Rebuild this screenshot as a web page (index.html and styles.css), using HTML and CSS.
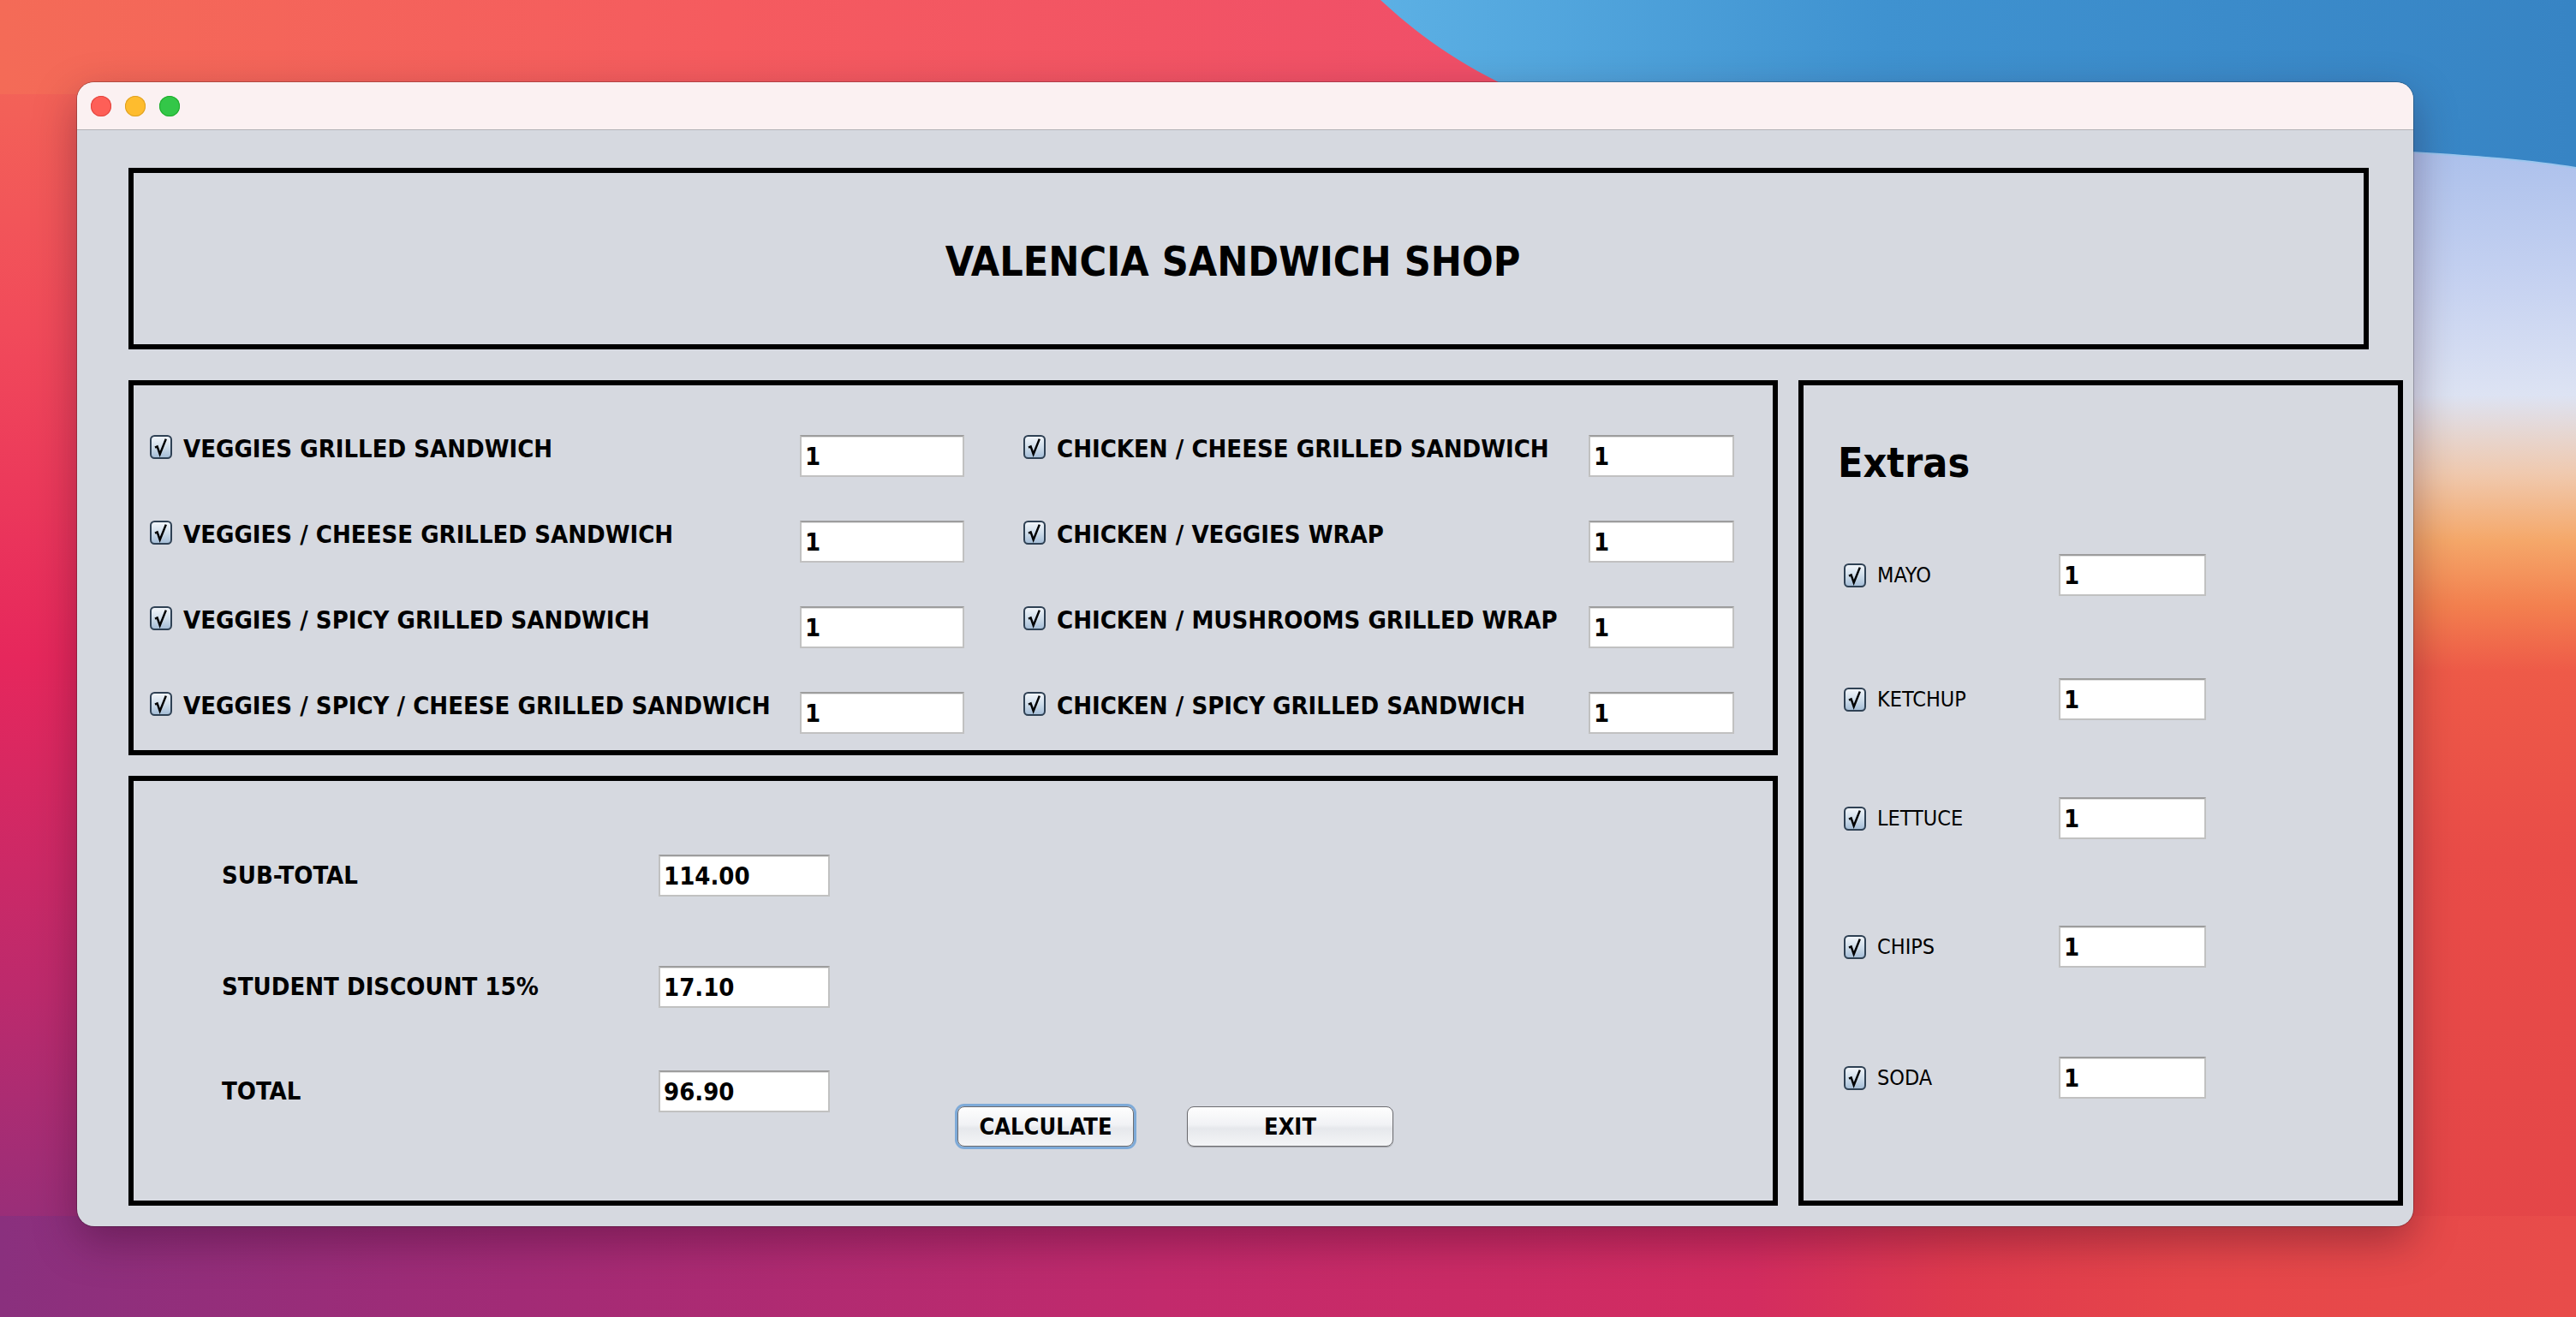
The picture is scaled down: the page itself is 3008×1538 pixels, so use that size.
FILE: index.html
```html
<!DOCTYPE html>
<html lang="en">
<head>
<meta charset="utf-8">
<title>Valencia Sandwich Shop</title>
<link rel="stylesheet" href="styles.css">
</head>
<body>
<svg class="wallpaper" width="3008" height="1538" viewBox="0 0 3008 1538" aria-hidden="true">
  <defs>
    <linearGradient id="wpBase" x1="0" y1="0" x2="0" y2="1538" gradientUnits="userSpaceOnUse">
      <stop offset="0" stop-color="#f46b57"/>
      <stop offset="0.25" stop-color="#f14a5a"/>
      <stop offset="0.5" stop-color="#e6275c"/>
      <stop offset="0.75" stop-color="#bd2a6c"/>
      <stop offset="1" stop-color="#8a307e"/>
    </linearGradient>
    <linearGradient id="wpTop" x1="0" y1="0" x2="1700" y2="0" gradientUnits="userSpaceOnUse">
      <stop offset="0" stop-color="#f46b57"/>
      <stop offset="0.5" stop-color="#f55b5f"/>
      <stop offset="1" stop-color="#f04f68"/>
    </linearGradient>
    <linearGradient id="wpBottom" x1="0" y1="0" x2="3008" y2="0" gradientUnits="userSpaceOnUse">
      <stop offset="0" stop-color="#8a307e"/>
      <stop offset="0.2" stop-color="#a22b76"/>
      <stop offset="0.45" stop-color="#c22a6c"/>
      <stop offset="0.68" stop-color="#d32c60"/>
      <stop offset="0.76" stop-color="#df3a4e"/>
      <stop offset="0.85" stop-color="#e6464a"/>
      <stop offset="1" stop-color="#e84c4a"/>
    </linearGradient>
    <linearGradient id="wpRight" x1="0" y1="0" x2="0" y2="1538" gradientUnits="userSpaceOnUse">
      <stop offset="0" stop-color="#adc1ec"/>
      <stop offset="0.117" stop-color="#adc1ec"/>
      <stop offset="0.215" stop-color="#c6d2f1"/>
      <stop offset="0.3" stop-color="#dde3f3"/>
      <stop offset="0.36" stop-color="#f0c9ae"/>
      <stop offset="0.41" stop-color="#f5a86a"/>
      <stop offset="0.46" stop-color="#f3804f"/>
      <stop offset="0.51" stop-color="#ee5a48"/>
      <stop offset="0.65" stop-color="#e94c48"/>
      <stop offset="1" stop-color="#e34448"/>
    </linearGradient>
    <linearGradient id="wpBlue" x1="1612" y1="0" x2="3008" y2="0" gradientUnits="userSpaceOnUse">
      <stop offset="0" stop-color="#5cb0e4"/>
      <stop offset="0.42" stop-color="#3f92d0"/>
      <stop offset="1" stop-color="#3784c4"/>
    </linearGradient>
  </defs>
  <rect x="0" y="0" width="3008" height="1538" fill="url(#wpBase)"/>
  <rect x="0" y="0" width="3008" height="110" fill="url(#wpTop)"/>
  <rect x="2780" y="0" width="228" height="1538" fill="url(#wpRight)"/>
  <rect x="0" y="1420" width="3008" height="118" fill="url(#wpBottom)"/>
  <path d="M1612 0 C1650 35 1700 75 1780 110 C2100 150 2500 165 2818 178 C2900 182 2960 188 3008 196 L3008 0 Z" fill="url(#wpBlue)"/>
  <path d="M2780 176 C2900 182 2960 188 3008 196" fill="none" stroke="#9cc6ee" stroke-width="2"/>
</svg>

<svg class="defs" width="0" height="0" aria-hidden="true">
  <defs>
    <linearGradient id="cbFill" x1="0" y1="0" x2="0" y2="1">
      <stop offset="0" stop-color="#f4f7fb"/>
      <stop offset="0.5" stop-color="#d0deeb"/>
      <stop offset="1" stop-color="#a3bcd6"/>
    </linearGradient>
    <symbol id="cb" viewBox="0 0 26 28">
      <rect x="1" y="1" width="24" height="26" rx="4.5" fill="url(#cbFill)" stroke="#2f4154" stroke-width="2"/>
      <path d="M6 14.6 L8.6 13.4 L11.7 22.4 L18.8 4.6" fill="none" stroke="#000" stroke-width="2.5" stroke-linejoin="miter"/>
    </symbol>
  </defs>
</svg>

<div class="window">
  <div class="titlebar">
    <span class="light red"></span>
    <span class="light yellow"></span>
    <span class="light green"></span>
  </div>
  <div class="content">
    <div class="title-box">
      <h1 class="title">VALENCIA SANDWICH SHOP</h1>
    </div>
    <div class="lower">
      <div class="left-col">
        <div class="items-box">
          <div class="items-grid">
            <div class="item item-left">
              <svg class="cb"><use href="#cb"/></svg>
              <span class="item-label">VEGGIES GRILLED SANDWICH</span>
              <input class="field" type="text" value="1" readonly>
            </div>
            <div class="item item-right">
              <svg class="cb"><use href="#cb"/></svg>
              <span class="item-label">CHICKEN / CHEESE GRILLED SANDWICH</span>
              <input class="field" type="text" value="1" readonly>
            </div>
            <div class="item item-left">
              <svg class="cb"><use href="#cb"/></svg>
              <span class="item-label">VEGGIES / CHEESE GRILLED SANDWICH</span>
              <input class="field" type="text" value="1" readonly>
            </div>
            <div class="item item-right">
              <svg class="cb"><use href="#cb"/></svg>
              <span class="item-label">CHICKEN / VEGGIES WRAP</span>
              <input class="field" type="text" value="1" readonly>
            </div>
            <div class="item item-left">
              <svg class="cb"><use href="#cb"/></svg>
              <span class="item-label">VEGGIES / SPICY GRILLED SANDWICH</span>
              <input class="field" type="text" value="1" readonly>
            </div>
            <div class="item item-right">
              <svg class="cb"><use href="#cb"/></svg>
              <span class="item-label">CHICKEN / MUSHROOMS GRILLED WRAP</span>
              <input class="field" type="text" value="1" readonly>
            </div>
            <div class="item item-left">
              <svg class="cb"><use href="#cb"/></svg>
              <span class="item-label">VEGGIES / SPICY / CHEESE GRILLED SANDWICH</span>
              <input class="field" type="text" value="1" readonly>
            </div>
            <div class="item item-right">
              <svg class="cb"><use href="#cb"/></svg>
              <span class="item-label">CHICKEN / SPICY GRILLED SANDWICH</span>
              <input class="field" type="text" value="1" readonly>
            </div>
          </div>
        </div>
        <div class="totals-box">
          <div class="total-row">
            <span class="total-label">SUB-TOTAL</span>
            <input class="field total-field" type="text" value="114.00" readonly>
          </div>
          <div class="total-row">
            <span class="total-label">STUDENT DISCOUNT 15%</span>
            <input class="field total-field" type="text" value="17.10" readonly>
          </div>
          <div class="total-row">
            <span class="total-label">TOTAL</span>
            <input class="field total-field" type="text" value="96.90" readonly>
            <div class="buttons">
              <button class="btn btn-calc" type="button">CALCULATE</button>
              <button class="btn btn-exit" type="button">EXIT</button>
            </div>
          </div>
        </div>
      </div>
      <div class="extras-box">
        <h2 class="extras-title">Extras</h2>
        <div class="extras-list">
          <div class="extra-row">
            <svg class="cb"><use href="#cb"/></svg>
            <span class="extra-label">MAYO</span>
            <input class="field" type="text" value="1" readonly>
          </div>
          <div class="extra-row">
            <svg class="cb"><use href="#cb"/></svg>
            <span class="extra-label">KETCHUP</span>
            <input class="field" type="text" value="1" readonly>
          </div>
          <div class="extra-row">
            <svg class="cb"><use href="#cb"/></svg>
            <span class="extra-label">LETTUCE</span>
            <input class="field" type="text" value="1" readonly>
          </div>
          <div class="extra-row">
            <svg class="cb"><use href="#cb"/></svg>
            <span class="extra-label">CHIPS</span>
            <input class="field" type="text" value="1" readonly>
          </div>
          <div class="extra-row">
            <svg class="cb"><use href="#cb"/></svg>
            <span class="extra-label">SODA</span>
            <input class="field" type="text" value="1" readonly>
          </div>
        </div>
      </div>
    </div>
  </div>
</div>
</body>
</html>
```
FILE: styles.css
```css
* {
  box-sizing: border-box;
}

html,
body {
  margin: 0;
}

body {
  position: relative;
  width: 3008px;
  height: 1538px;
  overflow: hidden;
  padding: 96px 0 0 90px;
  font-family: "DejaVu Sans Condensed", "DejaVu Sans", sans-serif;
  font-stretch: condensed;
  color: #000;
}

.wallpaper {
  position: absolute;
  top: 0;
  left: 0;
  z-index: 0;
}

.defs {
  position: absolute;
  width: 0;
  height: 0;
  overflow: hidden;
}

.window {
  position: relative;
  z-index: 1;
  width: 2728px;
  height: 1336px;
  border-radius: 20px;
  overflow: hidden;
  background: #d6d9e0;
  box-shadow: 0 0 0 1px rgba(0, 0, 0, 0.22), 0 18px 50px rgba(40, 0, 30, 0.35);
}

.titlebar {
  height: 56px;
  background: #fbf1f2;
  border-bottom: 1px solid #b3b3b7;
  display: flex;
  gap: 16px;
  padding: 16px 0 0 16px;
}

.light {
  width: 24px;
  height: 24px;
  border-radius: 50%;
}

.red {
  background: #fe5f57;
  box-shadow: inset 0 0 0 1px #e2463f;
}

.yellow {
  background: #febc2e;
  box-shadow: inset 0 0 0 1px #dea123;
}

.green {
  background: #33c748;
  box-shadow: inset 0 0 0 1px #1fac2c;
}

.content {
  padding: 44px 0 0 60px;
}

.title-box {
  width: 2616px;
  height: 212px;
  border: 6px solid #000;
  display: flex;
  align-items: center;
  justify-content: center;
  padding: 5px 37px 0 0;
}

.title {
  margin: 0;
  font-size: 48px;
  font-weight: bold;
  line-height: 56px;
  white-space: nowrap;
}

.lower {
  display: flex;
  gap: 24px;
  margin-top: 36px;
}

.left-col {
  width: 1926px;
  display: flex;
  flex-direction: column;
  gap: 24px;
}

.items-box {
  height: 438px;
  border: 6px solid #000;
  padding: 58px 0 0 19px;
}

.items-grid {
  display: grid;
  grid-template-columns: 951px 830px;
  column-gap: 69px;
  row-gap: 51px;
}

.item {
  display: grid;
  column-gap: 13px;
  align-items: start;
  height: 49px;
}

.item-left {
  grid-template-columns: 26px 707px 192px;
}

.item-right {
  grid-template-columns: 26px 608px 170px;
}

.cb {
  display: block;
  width: 26px;
  height: 28px;
}

.item-label {
  font-size: 29px;
  font-weight: bold;
  line-height: 28px;
  margin-top: 2px;
  white-space: nowrap;
}

.field {
  display: block;
  width: 100%;
  height: 49px;
  margin: 0;
  padding: 0 4px;
  border: 2px solid #c1c1c1;
  border-top-color: #9d9d9d;
  background: #fff;
  box-shadow: inset 0 1px 0 #e2e2e2;
  font-family: "DejaVu Sans Condensed", "DejaVu Sans", sans-serif;
  font-stretch: condensed;
  font-size: 29px;
  font-weight: bold;
  color: #000;
  outline: none;
}

.totals-box {
  height: 502px;
  border: 6px solid #000;
  padding: 86px 0 0 103px;
}

.total-row {
  display: flex;
  align-items: flex-start;
}

.total-row:nth-child(2) {
  margin-top: 81px;
}

.total-row:nth-child(3) {
  margin-top: 73px;
}

.total-label {
  flex: none;
  width: 510px;
  font-size: 29px;
  font-weight: bold;
  line-height: 49px;
  white-space: nowrap;
}

.total-field {
  flex: none;
  width: 200px;
}

.buttons {
  display: flex;
  gap: 62px;
  margin: 42px 0 0 149px;
}

.btn {
  height: 47px;
  margin: 0;
  padding: 0;
  border: 1.5px solid #6c6c70;
  border-radius: 8px;
  background: linear-gradient(#fefefe, #f1f2f5 45%, #e6e8ec 55%, #f4f5f7);
  font-family: "DejaVu Sans Condensed", "DejaVu Sans", sans-serif;
  font-stretch: condensed;
  font-size: 27px;
  font-weight: bold;
  color: #000;
}

.btn-calc {
  width: 206px;
  box-shadow: 0 0 0 3px #7eaad8;
}

.btn-exit {
  width: 241px;
  box-shadow: 0 1px 1px rgba(0, 0, 0, 0.25);
}

.extras-box {
  width: 706px;
  height: 964px;
  border: 6px solid #000;
  padding: 0 0 0 47px;
}

.extras-title {
  margin: 62px 0 0 -7px;
  font-size: 48px;
  font-weight: bold;
  line-height: 56px;
}

.extras-list {
  margin-top: 79px;
}

.extra-row {
  display: grid;
  grid-template-columns: 26px 199px 172px;
  column-gap: 13px;
  align-items: center;
  height: 49px;
}

.extra-row:nth-child(2) {
  margin-top: 96px;
}

.extra-row:nth-child(3) {
  margin-top: 90px;
}

.extra-row:nth-child(4) {
  margin-top: 101px;
}

.extra-row:nth-child(5) {
  margin-top: 104px;
}

.extra-label {
  font-size: 25px;
  font-weight: normal;
  white-space: nowrap;
}
```
